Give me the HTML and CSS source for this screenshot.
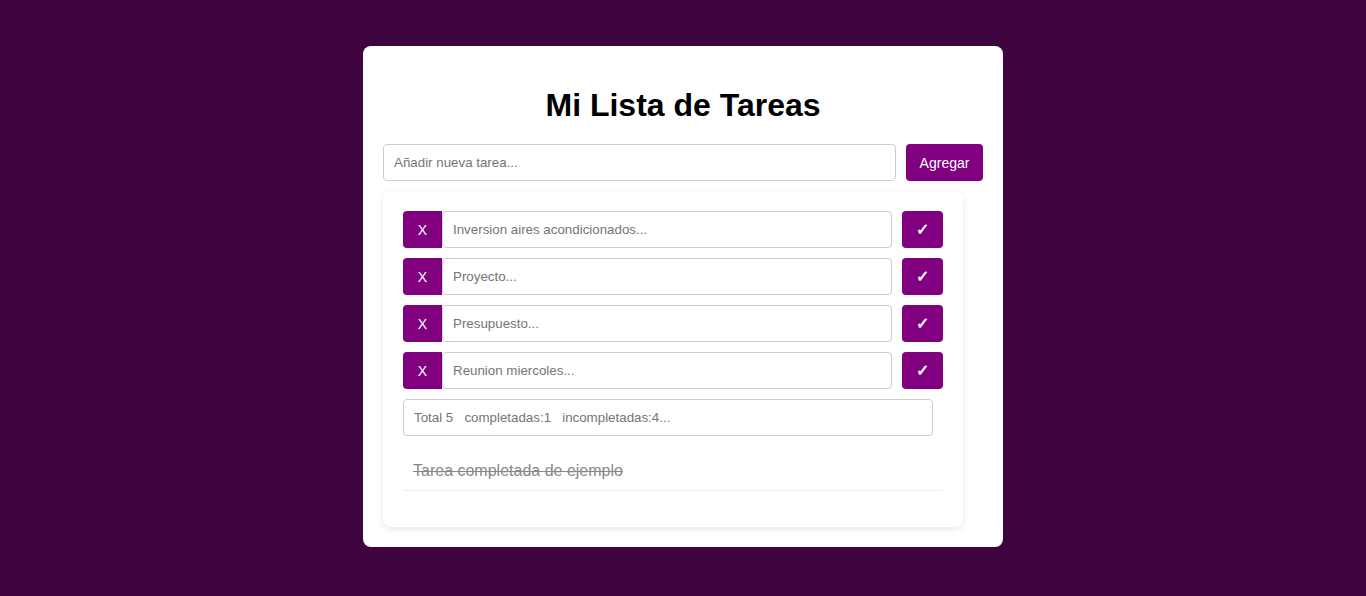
FILE: index.html
```html
<!DOCTYPE html>
<html lang="es">
<head>
<meta charset="utf-8">
<title>Mi Lista de Tareas</title>
<link rel="stylesheet" href="styles.css">
</head>
<body>
<main class="card">
  <h1 class="title">Mi Lista de Tareas</h1>
  <div class="add-row">
    <input class="field add-input" type="text" placeholder="Añadir nueva tarea...">
    <button class="btn add-btn">Agregar</button>
  </div>
  <section class="panel">
    <div class="task">
      <button class="btn del-btn">X</button>
      <input class="field task-input" type="text" placeholder="Inversion aires acondicionados...">
      <button class="btn ok-btn">✓</button>
    </div>
    <div class="task">
      <button class="btn del-btn">X</button>
      <input class="field task-input" type="text" placeholder="Proyecto...">
      <button class="btn ok-btn">✓</button>
    </div>
    <div class="task">
      <button class="btn del-btn">X</button>
      <input class="field task-input" type="text" placeholder="Presupuesto...">
      <button class="btn ok-btn">✓</button>
    </div>
    <div class="task">
      <button class="btn del-btn">X</button>
      <input class="field task-input" type="text" placeholder="Reunion miercoles...">
      <button class="btn ok-btn">✓</button>
    </div>
    <input class="field stats" type="text" placeholder="Total 5 &nbsp; completadas:1 &nbsp; incompletadas:4...">
    <ul class="done-list">
      <li class="done-item">Tarea completada de ejemplo</li>
    </ul>
  </section>
</main>
</body>
</html>
```

FILE: styles.css
```css
* { box-sizing: border-box; }

html, body {
  margin: 0;
  padding: 0;
}

body {
  background: #3d0440;
  font-family: "Liberation Sans", Arial, sans-serif;
  min-height: 596px;
  display: flex;
  justify-content: center;
  align-items: flex-start;
  padding-top: 46px;
}

.card {
  width: 640px;
  background: #ffffff;
  border-radius: 8px;
  padding: 20px;
}

.title {
  margin: 21px 0 20px;
  font-size: 32px;
  font-weight: bold;
  line-height: 37px;
  text-align: center;
  color: #000;
}

.add-row {
  display: flex;
  gap: 10px;
}

.field {
  height: 37px;
  border: 1px solid #cccccc;
  border-radius: 4px;
  padding: 0 10px;
  font-family: "Liberation Sans", Arial, sans-serif;
  font-size: 13.333px;
  color: #333;
  background: #fff;
  outline: none;
}

.field::placeholder {
  color: #757575;
  opacity: 1;
}

.add-input {
  flex: 1;
}

.btn {
  border: none;
  background: #800080;
  color: #ffffff;
  font-family: "Liberation Sans", Arial, sans-serif;
  font-size: 14px;
  border-radius: 4px;
  height: 37px;
  padding: 0;
  cursor: pointer;
}

.add-btn {
  width: 77px;
}

.panel {
  margin-top: 10px;
  margin-right: 20px;
  padding: 20px 20px 20px;
  border-radius: 8px;
  background: #fff;
  box-shadow: 0 2px 6px rgba(0, 0, 0, 0.1);
  display: flex;
  flex-direction: column;
  align-items: flex-start;
}

.task {
  display: flex;
  width: 540px;
  margin-bottom: 10px;
}

.del-btn {
  width: 39px;
  border-radius: 4px 0 0 4px;
  font-size: 14px;
}

.task-input {
  width: 450px;
}

.ok-btn {
  width: 41px;
  margin-left: 10px;
  font-size: 16px;
  font-weight: bold;
}

.stats {
  width: 530px;
}

.done-list {
  list-style: none;
  margin: 15px 0 16px;
  padding: 0;
  width: 540px;
}

.done-item {
  padding: 10px 10px 10px;
  font-size: 16px;
  line-height: 19px;
  color: #888888;
  text-decoration: line-through;
  border-bottom: 1px solid #eeeeee;
}
```
